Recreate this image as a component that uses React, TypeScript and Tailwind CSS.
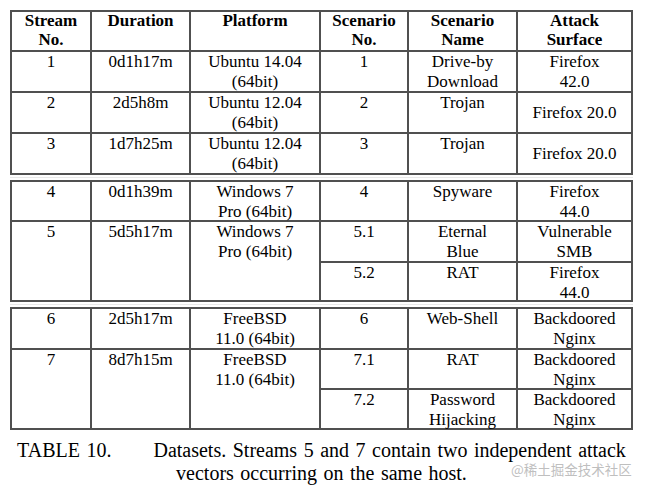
import React from "react";

type CellProps = {
  lines: string[];
  span?: boolean;
  middle?: boolean;
  bold?: boolean;
};

function Cell({ lines, span, middle, bold }: CellProps) {
  const base =
    "border-r-2 border-b-2 border-[#505050] text-center text-black flex flex-col";
  const cls = [
    base,
    span ? "row-span-2" : "",
    middle ? "justify-center" : "justify-start",
    bold ? "font-bold leading-[19px]" : "leading-[20px]",
  ].join(" ");
  return (
    <div className={cls}>
      <div className={bold ? "-mt-[1px]" : ""}>
        {lines.map((l, i) => (
          <div key={i} className="whitespace-nowrap">
            {l}
          </div>
        ))}
      </div>
    </div>
  );
}

const gridBase =
  "grid grid-cols-[80px_99px_130px_88px_109px_115px] border-l-2 border-t-2 border-[#505050] w-[623px]";

function Separator() {
  return (
    <div className="h-[5px] w-[623px] pt-[2px]">
      <div className="h-px bg-[#e9e9e9]" />
    </div>
  );
}

export default function App() {
  return (
    <div
      className="relative w-[647px] h-[493px] bg-white overflow-hidden pt-[10px] pl-[10px] text-[17px]"
      style={{ fontFamily: '"Liberation Serif", "Times New Roman", serif' }}
    >
      {/* Section 1 */}
      <div className={gridBase + " grid-rows-[40px_41px_41px_41px]"}>
        <Cell bold lines={["Stream", "No."]} />
        <Cell bold lines={["Duration"]} />
        <Cell bold lines={["Platform"]} />
        <Cell bold lines={["Scenario", "No."]} />
        <Cell bold lines={["Scenario", "Name"]} />
        <Cell bold lines={["Attack", "Surface"]} />

        <Cell lines={["1"]} />
        <Cell lines={["0d1h17m"]} />
        <Cell lines={["Ubuntu 14.04", "(64bit)"]} />
        <Cell lines={["1"]} />
        <Cell lines={["Drive-by", "Download"]} />
        <Cell lines={["Firefox", "42.0"]} />

        <Cell lines={["2"]} />
        <Cell lines={["2d5h8m"]} />
        <Cell lines={["Ubuntu 12.04", "(64bit)"]} />
        <Cell lines={["2"]} />
        <Cell lines={["Trojan"]} />
        <Cell middle lines={["Firefox 20.0"]} />

        <Cell lines={["3"]} />
        <Cell lines={["1d7h25m"]} />
        <Cell lines={["Ubuntu 12.04", "(64bit)"]} />
        <Cell lines={["3"]} />
        <Cell lines={["Trojan"]} />
        <Cell middle lines={["Firefox 20.0"]} />
      </div>

      <Separator />

      {/* Section 2 */}
      <div className={gridBase + " grid-rows-[40px_41px_39px]"}>
        <Cell lines={["4"]} />
        <Cell lines={["0d1h39m"]} />
        <Cell lines={["Windows 7", "Pro (64bit)"]} />
        <Cell lines={["4"]} />
        <Cell lines={["Spyware"]} />
        <Cell lines={["Firefox", "44.0"]} />

        <Cell span lines={["5"]} />
        <Cell span lines={["5d5h17m"]} />
        <Cell span lines={["Windows 7", "Pro (64bit)"]} />
        <Cell lines={["5.1"]} />
        <Cell lines={["Eternal", "Blue"]} />
        <Cell lines={["Vulnerable", "SMB"]} />

        <Cell lines={["5.2"]} />
        <Cell lines={["RAT"]} />
        <Cell lines={["Firefox", "44.0"]} />
      </div>

      <Separator />

      {/* Section 3 */}
      <div className={gridBase + " grid-rows-[41px_40px_40px]"}>
        <Cell lines={["6"]} />
        <Cell lines={["2d5h17m"]} />
        <Cell lines={["FreeBSD", "11.0 (64bit)"]} />
        <Cell lines={["6"]} />
        <Cell lines={["Web-Shell"]} />
        <Cell lines={["Backdoored", "Nginx"]} />

        <Cell span lines={["7"]} />
        <Cell span lines={["8d7h15m"]} />
        <Cell span lines={["FreeBSD", "11.0 (64bit)"]} />
        <Cell lines={["7.1"]} />
        <Cell lines={["RAT"]} />
        <Cell lines={["Backdoored", "Nginx"]} />

        <Cell lines={["7.2"]} />
        <Cell lines={["Password", "Hijacking"]} />
        <Cell lines={["Backdoored", "Nginx"]} />
      </div>

      {/* Caption */}
      <div className="mt-[9px] w-[623px] text-[20px] leading-[23px] text-black text-center [word-spacing:1.5px]">
        <div className="whitespace-nowrap">
          <span>TABLE 10.</span>
          <span className="inline-block w-[42px]" />
          <span>Datasets. Streams 5 and 7 contain two independent attack</span>
        </div>
        <div className="whitespace-nowrap">vectors occurring on the same host.</div>
      </div>

      {/* Watermark */}
      <div
        className="absolute left-[511px] top-[463px] text-[13.5px] leading-none text-[#bfbfbf] whitespace-nowrap"
        style={{ fontFamily: '"Noto Sans CJK SC", "Noto Sans", sans-serif' }}
      >
        @稀土掘金技术社区
      </div>
    </div>
  );
}
